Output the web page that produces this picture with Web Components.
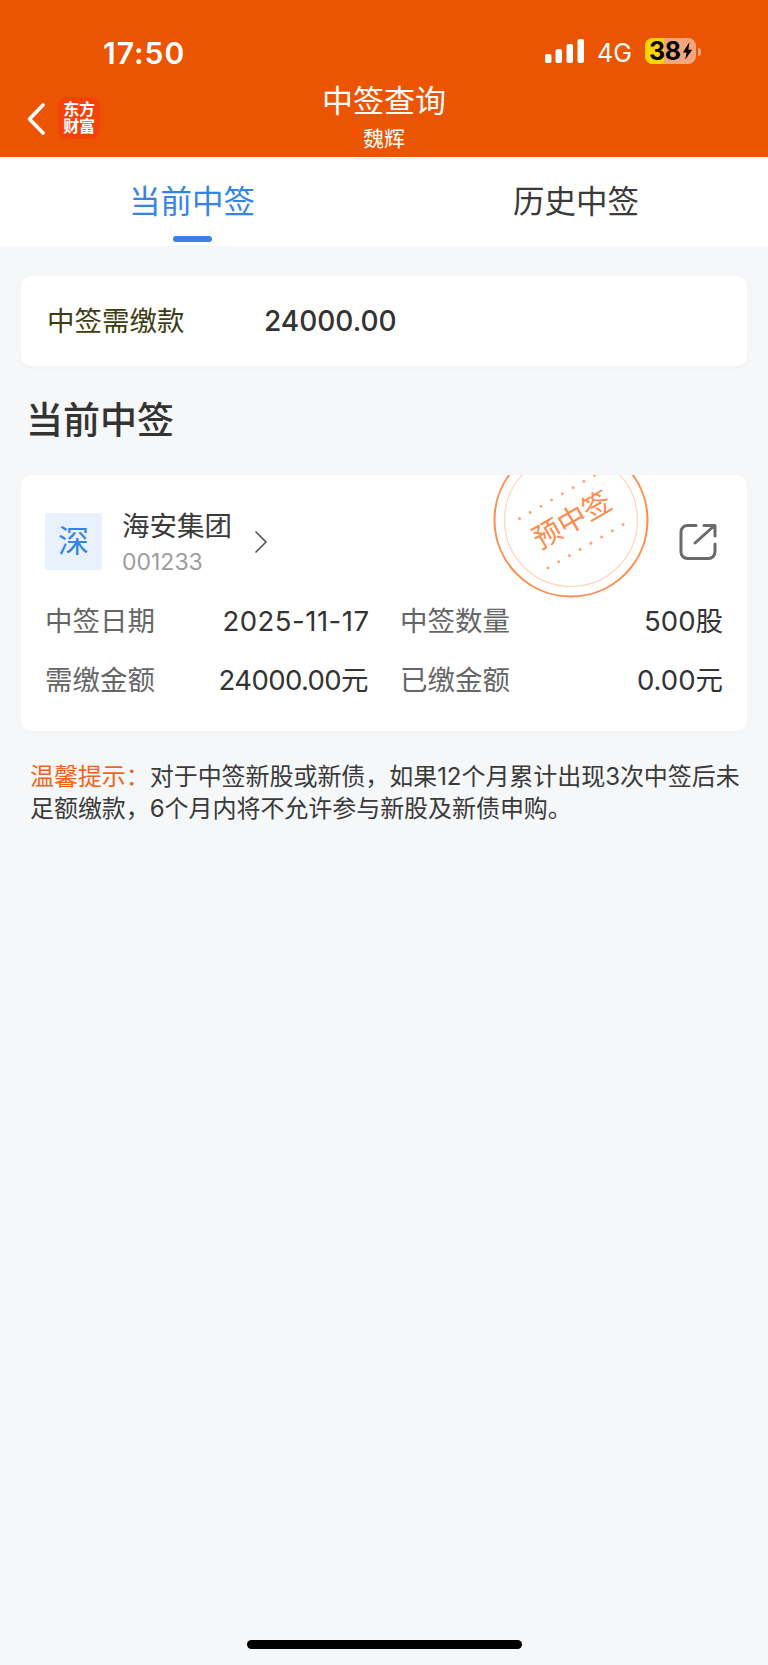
<!DOCTYPE html>
<html lang="zh-CN">
<head>
<meta charset="utf-8">
<title>中签查询</title>
<style>
  html, body { margin: 0; padding: 0; }
  body {
    width: 768px;
    height: 1665px;
    overflow: hidden;
    background: #f6f7f9;
    color: #333;
    font-family: "Inter", "Noto Sans CJK SC", sans-serif;
    display: flex;
    flex-direction: column;
  }
</style>
</head>
<body>
  <app-header name="中签查询" user="魏辉"></app-header>
  <tab-bar></tab-bar>
  <summary-card label="中签需缴款" value="24000.00"></summary-card>
  <section-title>当前中签</section-title>
  <stock-card name="海安集团" code="001233" market="深"></stock-card>
  <tip-note label="温馨提示：">对于中签新股或新债，如果12个月累计出现3次中签后未足额缴款，6个月内将不允许参与新股及新债申购。</tip-note>
  <home-bar></home-bar>

<script>
class AppHeader extends HTMLElement {
  constructor() {
    super();
    const name = this.getAttribute('name');
    const user = this.getAttribute('user');
    this.attachShadow({ mode: 'open' }).innerHTML = `
      <style>
        :host { display: block; height: 157px; background: #eb5502; color: #fff; flex: none; }
        .status { height: 82px; display: flex; align-items: flex-end; }
        .time { margin: 0 0 5px 103px; width: 442px; height: 48px; line-height: 48px; font-size: 30px; font-weight: 600; letter-spacing: 1px; }
        .signal { display: block; width: 39px; height: 24px; margin-bottom: 19px; }
        .net { margin: 0 0 4px 13px; width: 48px; height: 48px; line-height: 46px; font-size: 25px; font-weight: 400; }
        .battery { position: relative; width: 51px; height: 26px; margin-bottom: 18px; border-radius: 8px; background: #f3a67e; color: #000; display: flex; align-items: center; }
        .battery i { position: absolute; left: 0; top: 0; bottom: 0; width: 19px; border-radius: 8px 0 0 8px; background: #ffd500; }
        .battery b { position: relative; margin-left: 4px; font-size: 25px; line-height: 26px; font-weight: 700; letter-spacing: -.3px; }
        .battery svg { position: relative; width: 11px; height: 18px; margin-left: 1px; }
        .tip { width: 3px; height: 8px; margin: 0 0 26px 2px; background: #f3a67e; border-radius: 0 3px 3px 0; }
        .nav { height: 75px; display: grid; grid-template-columns: 200px 1fr 200px; }
        .left { display: flex; align-items: flex-start; padding: 15px 0 0 27px; }
        .back { width: 18px; height: 32px; margin-top: 6px; }
        .logo { width: 42px; height: 42px; margin-left: 13px; border-radius: 9px; background: #f5420a; font-size: 16px; line-height: 17px; font-weight: 700; text-align: center; display: flex; flex-direction: column; justify-content: center; letter-spacing: -.3px; }
        .center { text-align: center; }
        .title { font-size: 31px; line-height: 36px; margin-top: 1px; }
        .user { font-size: 21px; line-height: 26px; margin-top: 7px; }
      </style>
      <div class="status">
        <div class="time">17:50</div>
        <svg class="signal" viewBox="0 0 39 24" fill="#fff">
          <rect x="0" y="15" width="6.500" height="9" rx="2"/>
          <rect x="10.500" y="10" width="6.500" height="14" rx="2"/>
          <rect x="21.500" y="5" width="6.500" height="19" rx="2"/>
          <rect x="32.500" y="0" width="6.500" height="24" rx="2"/>
        </svg>
        <div class="net">4G</div>
        <div class="battery"><i></i><b>38</b>
          <svg viewBox="0 0 12 19"><path d="M8 0 1 11h4l-1.500 8L11 8H7z" fill="#000"/></svg>
        </div>
        <div class="tip"></div>
      </div>
      <div class="nav">
        <div class="left">
          <svg class="back" viewBox="0 0 18 32" fill="none" stroke="#fff" stroke-width="3.600" stroke-linecap="round" stroke-linejoin="round"><path d="M16 2 2.500 16 16 30"/></svg>
          <div class="logo"><span>东方</span><span>财富</span></div>
        </div>
        <div class="center">
          <div class="title">${name}</div>
          <div class="user">${user}</div>
        </div>
      </div>
    `;
  }
}

class TabBar extends HTMLElement {
  constructor() {
    super();
    this.attachShadow({ mode: 'open' }).innerHTML = `
      <style>
        :host { display: grid; grid-template-columns: 1fr 1fr; height: 89px; background: #fff; flex: none; }
        .tab { position: relative; text-align: center; font-size: 31.500px; line-height: 40px; padding-top: 25px; color: #3a3a3a; }
        .tab.on { color: #3584e4; }
        .tab.on::after { content: ""; position: absolute; left: 173px; top: 79px; width: 39px; height: 6px; border-radius: 3px; background: #3584e4; }
      </style>
      <div class="tab on">当前中签</div>
      <div class="tab">历史中签</div>
    `;
  }
}

class SummaryCard extends HTMLElement {
  constructor() {
    super();
    this.attachShadow({ mode: 'open' }).innerHTML = `
      <style>
        :host { display: flex; align-items: center; flex: none; height: 89px; margin: 30px 21px 0; padding: 0 0 1px 26px; background: #fff; border-radius: 10px; box-shadow: 0 1px 6px rgba(0,0,0,.03); }
        .label { width: 217px; margin-bottom: 4px; font-size: 27.500px; color: #3d3d12; }
        .value { font-size: 28px; font-weight: 500; color: #333; }
      </style>
      <div class="label">${this.getAttribute('label')}</div>
      <div class="value">${this.getAttribute('value')}</div>
    `;
  }
}

class SectionTitle extends HTMLElement {
  constructor() {
    super();
    this.attachShadow({ mode: 'open' }).innerHTML = `
      <style>
        :host { display: block; flex: none; margin: 32px 0 0 26px; height: 77px; font-size: 37px; line-height: 46px; font-weight: 500; color: #333; }
      </style>
      <slot></slot>
    `;
  }
}

class InfoCell extends HTMLElement {
  constructor() {
    super();
    this.attachShadow({ mode: 'open' }).innerHTML = `
      <style>
        :host { display: flex; justify-content: space-between; align-items: center; font-size: 27.500px; line-height: 36px; }
        .k { color: #666; }
        .v { color: #333; letter-spacing: var(--v-space, 0); margin-right: var(--v-shift, 0); }
      </style>
      <span class="k">${this.getAttribute('k')}</span>
      <span class="v">${this.getAttribute('v')}</span>
    `;
  }
}

class StockCard extends HTMLElement {
  constructor() {
    super();
    const dots = (y) => Array.from({ length: 8 }, (_, i) => `<circle cx="${-44 + i * 12.4}" cy="${y}" r="1.500"/>`).join('');
    this.attachShadow({ mode: 'open' }).innerHTML = `
      <style>
        :host { display: block; position: relative; flex: none; height: 256px; margin: 0 21px; background: #fff; border-radius: 10px; overflow: hidden; box-shadow: 0 1px 6px rgba(0,0,0,.03); }
        .head { display: flex; padding: 38px 0 0 24px; height: 127px; box-sizing: border-box; }
        .market { width: 57px; height: 57px; border-radius: 3px; background: #e8f1fc; color: #3584e4; font-size: 31px; line-height: 55px; text-align: center; }
        .names { margin-left: 20px; margin-top: -6px; }
        .name { font-size: 27.500px; line-height: 38px; color: #3a3a3a; }
        .code { font-size: 23px; line-height: 32px; color: #9c9c9c; margin-top: 1px; }
        .chev { width: 14px; height: 24px; margin: 17px 0 0 22px; }
        .stamp { position: absolute; left: 470px; top: -31px; width: 160px; height: 160px; }
        .stamp span { position: absolute; left: 2px; right: 0; top: 58px; text-align: center; font-size: 28.500px; line-height: 36px; color: #ff8a4c; transform: rotate(-30deg); }
        .open { position: absolute; left: 658px; top: 47px; width: 40px; height: 40px; }
        .rows { display: grid; grid-template-columns: 323px 323px; column-gap: 32px; row-gap: 23px; padding: 0 0 0 24px; margin-top: 1px; }
      </style>
      <div class="head">
        <div class="market">${this.getAttribute('market')}</div>
        <div class="names">
          <div class="name">${this.getAttribute('name')}</div>
          <div class="code">${this.getAttribute('code')}</div>
        </div>
        <svg class="chev" viewBox="0 0 14 24" fill="none" stroke="#555" stroke-width="1.700" stroke-linecap="round" stroke-linejoin="round"><path d="M2 2 12 12 2 22"/></svg>
      </div>
      <div class="stamp">
        <svg viewBox="0 0 160 160" width="160" height="160">
          <circle cx="80" cy="76" r="76.500" fill="none" stroke="#ff8a4c" stroke-width="2"/>
          <circle cx="80" cy="76" r="66.500" fill="none" stroke="#ffd3bd" stroke-width="1.200"/>
          <g transform="translate(80 76) rotate(-30)" fill="#ffa37a">${dots(-27)}${dots(30)}</g>
        </svg>
        <span>预中签</span>
      </div>
      <svg class="open" viewBox="0 0 40 40" fill="none" stroke="#6a6a6a" stroke-width="3" stroke-linecap="round" stroke-linejoin="round">
        <path d="M17 3.500H8.500A6.500 6.500 0 0 0 2 10v20a6.500 6.500 0 0 0 6.500 6.500h21a6.500 6.500 0 0 0 6.500-6.500V22"/>
        <path d="M16 21 35 4M25 3.500h11V14"/>
      </svg>
      <div class="rows">
        <info-cell k="中签日期" v="2025-11-17" style="--v-space:.5px;--v-shift:-1.500px"></info-cell>
        <info-cell k="中签数量" v="500股"></info-cell>
        <info-cell k="需缴金额" v="24000.00元" style="--v-space:-.6px"></info-cell>
        <info-cell k="已缴金额" v="0.00元"></info-cell>
      </div>
    `;
  }
}

class TipNote extends HTMLElement {
  constructor() {
    super();
    this.attachShadow({ mode: 'open' }).innerHTML = `
      <style>
        :host { display: block; flex: none; margin: 30px 20px 0 30px; font-size: 24px; line-height: 32px; color: #3a3a3a; letter-spacing: -.05px; }
        b { font-weight: 400; color: #f4621a; }
      </style>
      <b>${this.getAttribute('label')}</b><slot></slot>
    `;
  }
}

class HomeBar extends HTMLElement {
  constructor() {
    super();
    this.attachShadow({ mode: 'open' }).innerHTML = `
      <style>
        :host { display: block; flex: none; width: 275px; height: 9px; margin: auto auto 16px; border-radius: 5px; background: #000; }
      </style>
    `;
  }
}

customElements.define('app-header', AppHeader);
customElements.define('tab-bar', TabBar);
customElements.define('summary-card', SummaryCard);
customElements.define('section-title', SectionTitle);
customElements.define('info-cell', InfoCell);
customElements.define('stock-card', StockCard);
customElements.define('tip-note', TipNote);
customElements.define('home-bar', HomeBar);
</script>
</body>
</html>
